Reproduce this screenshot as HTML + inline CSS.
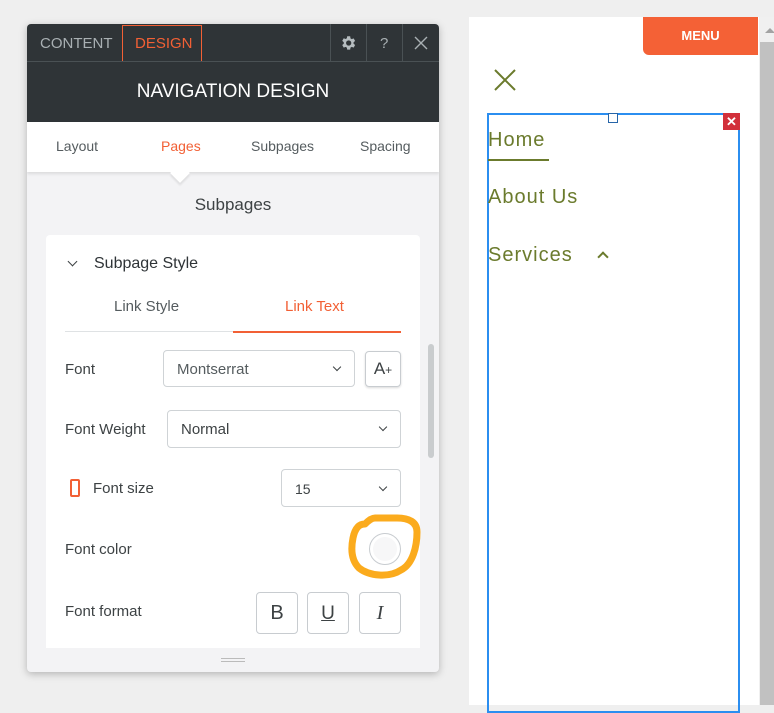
<!DOCTYPE html>
<html><head><meta charset="utf-8"><style>
*{box-sizing:border-box;margin:0;padding:0}
body{width:774px;height:705px;overflow:hidden;background:#efefef;font-family:"Liberation Sans",sans-serif;position:relative}
.abs{position:absolute}
.panel{left:27px;top:24px;width:412px;height:648px;background:#f3f3f5;border-radius:4px;box-shadow:0 2px 8px rgba(0,0,0,.25);overflow:hidden}
.top{left:0;top:0;width:412px;height:98px;background:#2f3437}
.tab{color:#a9b0b3;font-size:15px;top:11px}
.lbl{color:#3d4244;font-size:15px}
.sel{border:1px solid #cfd3d6;border-radius:4px;background:#fff;color:#3d4244;font-size:15px}
.chev{width:7px;height:7px;border-right:1.6px solid #3d4244;border-bottom:1.6px solid #3d4244;transform:rotate(45deg)}
.btn{width:42px;height:42px;border:1px solid #c8ccd0;border-radius:4px;background:#fff;top:568px;color:#3d4244;font-size:20px;text-align:center;line-height:40px}
</style></head><body>
<div class="abs panel">
 <div class="abs top"></div>
 <div class="abs tab" style="left:13px">CONTENT</div>
 <div class="abs" style="left:95px;top:1px;width:80px;height:37px;border:1px solid #f26035"></div>
 <div class="abs tab" style="left:108px;color:#f26035">DESIGN</div>
 <div class="abs" style="left:0;top:37px;width:412px;height:1px;background:#4a5154"></div>
 <div class="abs" style="left:303px;top:0;width:1px;height:37px;background:#4a5154"></div>
 <div class="abs" style="left:339px;top:0;width:1px;height:37px;background:#4a5154"></div>
 <div class="abs" style="left:375px;top:0;width:1px;height:37px;background:#4a5154"></div>
 <svg class="abs" style="left:312px;top:10px" width="18" height="18" viewBox="0 0 24 24"><path fill="#b5bcbf" d="M19.4 13a7.5 7.5 0 0 0 0-2l2.1-1.6-2-3.5-2.5 1a7 7 0 0 0-1.7-1L14.9 3h-4l-.4 2.7a7 7 0 0 0-1.7 1l-2.5-1-2 3.5L6.4 11a7.5 7.5 0 0 0 0 2l-2.1 1.6 2 3.5 2.5-1a7 7 0 0 0 1.7 1l.4 2.7h4l.4-2.7a7 7 0 0 0 1.7-1l2.5 1 2-3.5zM12.9 15.5a3.5 3.5 0 1 1 0-7 3.5 3.5 0 0 1 0 7z"/></svg>
 <div class="abs" style="left:353px;top:11px;color:#a9b0b3;font-size:15px">?</div>
 <svg class="abs" style="left:387px;top:12px" width="14" height="14"><path d="M1 1L13 13M13 1L1 13" stroke="#a9b0b3" stroke-width="1.4"/></svg>
 <div class="abs" style="left:0;top:57px;width:412px;text-align:center;color:#fff;font-size:19px">NAVIGATION DESIGN</div>
 <div class="abs" style="left:0;top:98px;width:412px;height:50px;background:#fff;box-shadow:0 2px 3px rgba(0,0,0,.1)"></div>
 <div class="abs" style="left:146px;top:142px;width:14px;height:14px;background:#fff;transform:rotate(45deg);box-shadow:2px 2px 2px rgba(0,0,0,.08)"></div>
 <div class="abs" style="left:0;top:98px;width:412px;height:48px;background:#fff"></div>
 <div class="abs lbl" style="left:29px;top:114px;font-size:14px;color:#555c5f">Layout</div>
 <div class="abs lbl" style="left:134px;top:114px;font-size:14px;color:#f26035">Pages</div>
 <div class="abs lbl" style="left:224px;top:114px;font-size:14px;color:#555c5f">Subpages</div>
 <div class="abs lbl" style="left:333px;top:114px;font-size:14px;color:#555c5f">Spacing</div>
 <div class="abs" style="left:0;top:171px;width:412px;text-align:center;color:#3d4244;font-size:17px">Subpages</div>
 <div class="abs" style="left:19px;top:211px;width:374px;height:413px;background:#fff;border-radius:4px 4px 0 0"></div>
 <div class="abs chev" style="left:42px;top:234px"></div>
 <div class="abs" style="left:67px;top:231px;font-size:16px;color:#2f3437">Subpage Style</div>
 <div class="abs" style="left:87px;top:274px;font-size:15px;color:#555c5f">Link Style</div>
 <div class="abs" style="left:258px;top:274px;font-size:15px;color:#f26035">Link Text</div>
 <div class="abs" style="left:38px;top:307px;width:168px;height:1px;background:#dfe2e4"></div>
 <div class="abs" style="left:206px;top:307px;width:168px;height:2px;background:#f26035"></div>
 <div class="abs lbl" style="left:38px;top:337px">Font</div>
 <div class="abs sel" style="left:136px;top:326px;width:192px;height:37px;padding:10px 13px;color:#555c5f">Montserrat</div>
 <div class="abs chev" style="left:307px;top:340px;width:6px;height:6px"></div>
 <div class="abs" style="left:338px;top:327px;width:36px;height:36px;border:1px solid #c8ccd0;border-radius:4px;box-shadow:0 1px 2px rgba(0,0,0,.15);text-align:center;line-height:34px;font-size:17px;color:#3d4244">A<span style="font-size:12px">+</span></div>
 <div class="abs lbl" style="left:38px;top:397px">Font Weight</div>
 <div class="abs sel" style="left:140px;top:386px;width:234px;height:38px;padding:10px 13px">Normal</div>
 <div class="abs chev" style="left:353px;top:400px;width:6px;height:6px"></div>
 <div class="abs" style="left:43px;top:455px;width:10px;height:18px;border:2px solid #f26035;border-radius:2px"></div>
 <div class="abs lbl" style="left:66px;top:456px">Font size</div>
 <div class="abs sel" style="left:254px;top:445px;width:120px;height:38px;padding:11px 13px;font-size:14px">15</div>
 <div class="abs chev" style="left:353px;top:460px;width:6px;height:6px"></div>
 <div class="abs lbl" style="left:38px;top:517px">Font color</div>
 <svg class="abs" style="left:318px;top:484px" width="84" height="72"><path d="M8 30 C10 20 14 16 20 16 C22 14 26 10 30 10 L52 10 C64 10 72 14 72 24 C72 38 68 56 56 62 C44 70 24 68 14 60 C6 52 6 40 8 30 Z" fill="none" stroke="#fbab1d" stroke-width="7" stroke-linejoin="round"/></svg>
 <div class="abs" style="left:342px;top:509px;width:32px;height:32px;border-radius:50%;border:1px solid #c8ccd0;background:#f7f7f8;box-shadow:inset 0 0 0 3px #fff"></div>
 <div class="abs lbl" style="left:38px;top:579px">Font format</div>
 <div class="abs btn" style="left:229px">B</div>
 <div class="abs btn" style="left:280px"><span style="text-decoration:underline;font-size:19px">U</span></div>
 <div class="abs btn" style="left:332px;font-style:italic;font-family:'Liberation Serif',serif">I</div>
 <div class="abs" style="left:401px;top:320px;width:6px;height:114px;border-radius:3px;background:#c9ccce"></div>
 <div class="abs" style="left:194px;top:634px;width:24px;height:1px;background:#bbb;box-shadow:0 3px 0 #bbb"></div>
</div>

<div class="abs" style="left:469px;top:17px;width:290px;height:688px;background:#fff"></div>
<div class="abs" style="left:759px;top:17px;width:15px;height:688px;background:#f0f0f0"></div>
<div class="abs" style="left:760px;top:42px;width:14px;height:663px;background:#c1c1c1"></div>
<div class="abs" style="left:765px;top:28px;width:0;height:0;border-left:5px solid transparent;border-right:5px solid transparent;border-bottom:5px solid #a3a3a3"></div>
<div class="abs" style="left:643px;top:17px;width:115px;height:38px;background:#f46136;border-radius:0 0 0 6px;color:#fff;font-size:13px;font-weight:bold;text-align:center;line-height:37px">MENU</div>
<svg class="abs" style="left:494px;top:69px" width="22" height="22"><path d="M1 1L21 21M21 1L1 21" stroke="#6b7b2d" stroke-width="2"/></svg>
<div class="abs" style="left:487px;top:113px;width:253px;height:600px;border:2px solid #2b8ef0"></div>
<div class="abs" style="left:608px;top:113px;width:10px;height:10px;border:1px solid #2765a8;background:#fff"></div>
<div class="abs" style="left:723px;top:113px;width:17px;height:17px;background:#d2303a;color:#fff;font-size:13px;font-weight:bold;text-align:center;line-height:17px">✕</div>
<div class="abs" style="left:488px;top:129px;font-size:20px;color:#6b7b2d;letter-spacing:1px">Home</div>
<div class="abs" style="left:488px;top:159px;width:61px;height:2px;background:#6b7b2d"></div>
<div class="abs" style="left:488px;top:186px;font-size:20px;color:#6b7b2d;letter-spacing:1px">About Us</div>
<div class="abs" style="left:488px;top:244px;font-size:20px;color:#6b7b2d;letter-spacing:1px">Services</div>
<div class="abs" style="left:599px;top:253px;width:8px;height:8px;border-left:2px solid #6b7b2d;border-top:2px solid #6b7b2d;transform:rotate(45deg)"></div>
</body></html>
